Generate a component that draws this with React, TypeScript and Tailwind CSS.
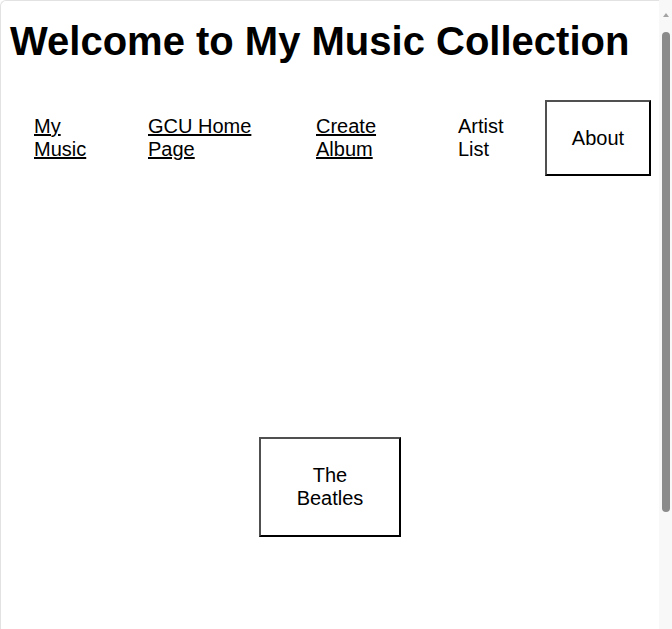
import React from 'react';

const links = [
  { label: 'My Music', w: 'w-[114px] pr-[44px]', underline: true },
  { label: 'GCU Home Page', w: 'w-[168px] pr-[40px]', underline: true },
  { label: 'Create Album', w: 'w-[142px] pr-[40px]', underline: true },
  { label: 'Artist List', w: 'w-[87px] pr-[20px]', underline: false },
];

export default function App() {
  return (
    <div className="flex h-screen w-full overflow-hidden bg-white text-black" style={{ fontFamily: "'Liberation Sans', Arial, sans-serif" }}>
      {/* page frame */}
      <div className="flex-1 border-l border-t border-[#e2e2e2] rounded-tl-[6px] pt-[17px]">
        <h1 className="pl-[9px] text-[40px] font-bold leading-[46px] h-[46px] whitespace-nowrap">
          Welcome to My Music Collection
        </h1>

        {/* Nav */}
        <nav className="mt-[36px] flex items-center pl-[33px] text-[20px] leading-[23px]">
          {links.map(l => (
            <div key={l.label} className={l.w}>
              <a href="#" className={l.underline ? 'underline' : 'no-underline'}>{l.label}</a>
            </div>
          ))}
          <div className="h-[76px] w-[106px] flex items-center justify-center border-2 border-t-[#505050] border-l-[#505050] border-r-black border-b-black">
            About
          </div>
        </nav>

        {/* Artists */}
        <div className="mt-[261px] flex justify-center">
          <div className="w-[142px] h-[100px] px-[25px] pb-[1px] flex items-center justify-center text-center text-[20px] leading-[23px] border-2 border-t-[#505050] border-l-[#505050] border-r-black border-b-black">
            The Beatles
          </div>
        </div>
      </div>

      {/* scrollbar */}
      <div className="w-[13px] shrink-0 bg-[#f8f8f8] flex flex-col items-center pt-[13px]">
        <div className="w-0 h-0 border-l-[3.5px] border-r-[3.5px] border-b-[4px] border-l-transparent border-r-transparent border-b-[#a3a3a3]" />
        <div className="mt-[15px] w-[8px] h-[480px] rounded-full bg-[#8b8b8b]" />
      </div>
    </div>
  );
}
